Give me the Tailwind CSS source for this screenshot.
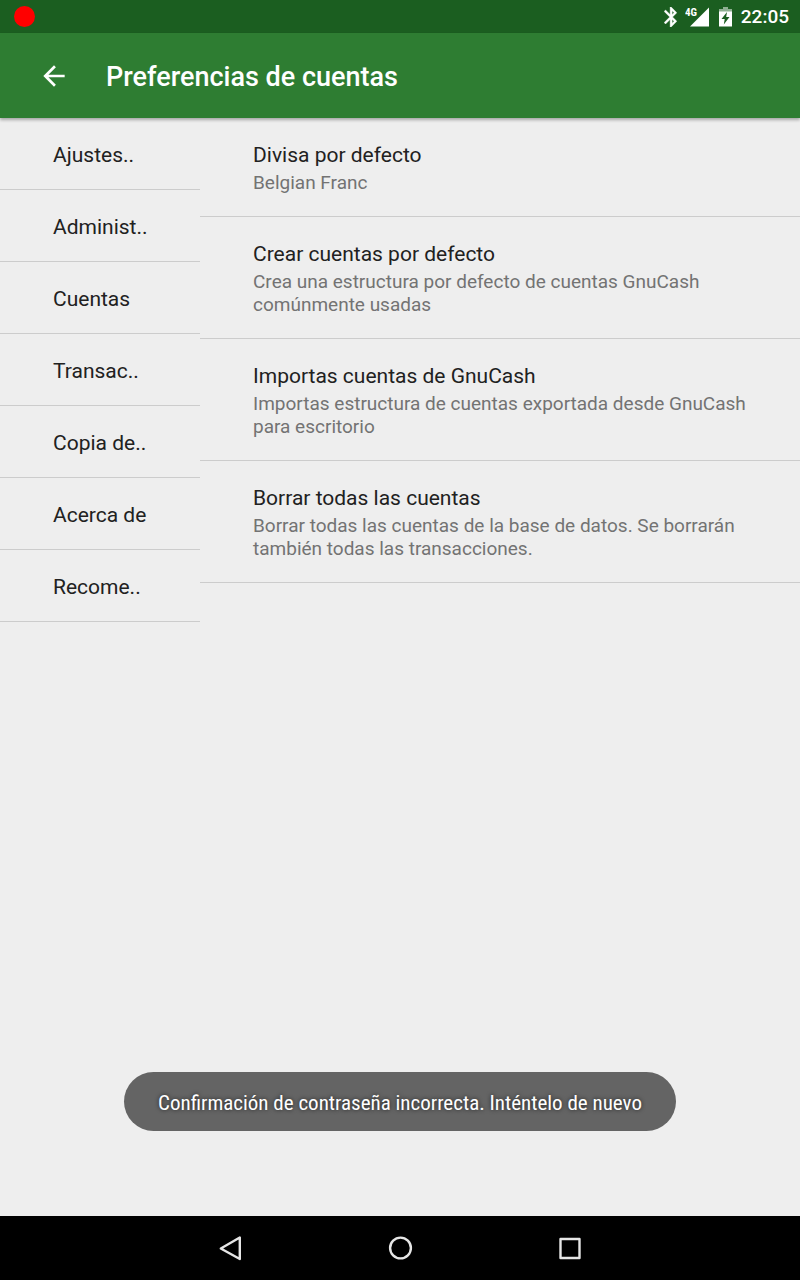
<!DOCTYPE html>
<html lang="es">
<head>
<meta charset="utf-8">
<meta name="viewport" content="width=device-width, initial-scale=1">
<title>Preferencias de cuentas</title>
<script src="https://cdn.jsdelivr.net/npm/@tailwindcss/browser@4"></script>
</head>
<body class="relative flex min-h-screen flex-col bg-[#eeeeee] font-['Roboto',sans-serif] text-[#212121]">
  <div class="flex h-[33px] items-center justify-between bg-[#1b5e20] pr-[11px] pl-[14px] text-white">
    <div class="size-[21px] rounded-full bg-[#ff0000]"></div>
    <div class="flex items-center">
      <svg class="mr-[8px] h-[20px] w-[13px]" viewBox="5 2 12.710 20" fill="currentColor" stroke="currentColor" stroke-width="0.400" aria-label="Bluetooth"><path d="M17.710 7.710L12 2h-1v7.590L6.410 5 5 6.410 10.590 12 5 17.590 6.410 19 11 14.410V22h1l5.710-5.710-4.300-4.290 4.300-4.290zM13 5.830l1.880 1.880L13 9.590V5.830zm1.880 10.460L13 18.170v-3.760l1.880 1.880z"/></svg>
      <svg class="mr-[10px] h-[20px] w-[24px]" viewBox="0 0 24 20" fill="currentColor" aria-label="4G"><path d="M24 .5v19H5z"/><text x="0" y="9" font-family="Roboto Condensed, Roboto" font-size="11" font-weight="700">4G</text></svg>
      <svg class="mr-[9px] h-[20px] w-[13px]" viewBox="0 0 13 20" aria-label="Batería"><path d="M4 0h5v2h4v3H0V2h4z" fill="#8fb092"/><path d="M0 4.500h13v15H0z" fill="#fff"/><path d="M8 5 2.500 12h3.200L4.800 17.500 10.500 10H7.200z" fill="#1b5e20"/></svg>
      <span class="text-[19px] leading-[23px] font-medium">22:05</span>
    </div>
  </div>

  <header class="z-10 flex h-[85px] items-center bg-[#2e7d32] pl-[38px] text-white shadow-[0_2px_3px_rgba(0,0,0,0.3)]">
    <button type="button" aria-label="Atrás" class="mr-[36px] size-[32px]">
      <svg class="size-[32px]" viewBox="0 0 24 24" fill="currentColor"><path d="M20 11H7.830l5.590-5.590L12 4l-8 8 8 8 1.410-1.410L7.830 13H20z"/></svg>
    </button>
    <h1 class="pt-[2px] text-[27px] leading-[32px] font-medium">Preferencias de cuentas</h1>
  </header>

  <div class="flex flex-1 items-start">
    <nav class="w-1/4 text-[21px] leading-[28px]">
      <a href="#" class="block border-b border-[#cccccc] pt-[23px] pb-[20px] pl-[53px]">Ajustes..</a>
      <a href="#" class="block border-b border-[#cccccc] pt-[23px] pb-[20px] pl-[53px]">Administ..</a>
      <a href="#" class="block border-b border-[#cccccc] pt-[23px] pb-[20px] pl-[53px]">Cuentas</a>
      <a href="#" class="block border-b border-[#cccccc] pt-[23px] pb-[20px] pl-[53px]">Transac..</a>
      <a href="#" class="block border-b border-[#cccccc] pt-[23px] pb-[20px] pl-[53px]">Copia de..</a>
      <a href="#" class="block border-b border-[#cccccc] pt-[23px] pb-[20px] pl-[53px]">Acerca de</a>
      <a href="#" class="block border-b border-[#cccccc] pt-[23px] pb-[20px] pl-[53px]">Recome..</a>
    </nav>
    <main class="w-3/4">
      <button type="button" class="flex w-full flex-col gap-[2px] border-b border-[#cccccc] pt-[23px] pr-[53px] pb-[22px] pl-[53px] text-left">
        <span class="text-[21px] leading-[28px]">Divisa por defecto</span>
        <span class="text-[19px] leading-[23px] text-[#737373]">Belgian Franc</span>
      </button>
      <button type="button" class="flex w-full flex-col gap-[2px] border-b border-[#cccccc] pt-[23px] pr-[53px] pb-[22px] pl-[53px] text-left">
        <span class="text-[21px] leading-[28px]">Crear cuentas por defecto</span>
        <span class="text-[19px] leading-[23px] text-[#737373]">Crea una estructura por defecto de cuentas GnuCash comúnmente usadas</span>
      </button>
      <button type="button" class="flex w-full flex-col gap-[2px] border-b border-[#cccccc] pt-[23px] pr-[53px] pb-[22px] pl-[53px] text-left">
        <span class="text-[21px] leading-[28px]">Importas cuentas de GnuCash</span>
        <span class="text-[19px] leading-[23px] text-[#737373]">Importas estructura de cuentas exportada desde GnuCash para escritorio</span>
      </button>
      <button type="button" class="flex w-full flex-col gap-[2px] border-b border-[#cccccc] pt-[23px] pr-[53px] pb-[22px] pl-[53px] text-left">
        <span class="text-[21px] leading-[28px]">Borrar todas las cuentas</span>
        <span class="text-[19px] leading-[23px] text-[#737373]">Borrar todas las cuentas de la base de datos. Se borrarán también todas las transacciones.</span>
      </button>
    </main>
  </div>

  <div role="status" class="absolute inset-x-0 bottom-[149px] flex justify-center">
    <p class="rounded-full bg-[#646464] px-[34px] pt-[17px] pb-[14px] font-['Roboto_Condensed','Roboto',sans-serif] text-[21px] leading-[28px] whitespace-nowrap text-white [text-shadow:0_0_4px_rgba(0,0,0,0.7)]">Confirmación de contraseña incorrecta. Inténtelo de nuevo</p>
  </div>

  <div class="flex h-[64px] items-center justify-center gap-[138px] bg-black text-[#e6e6e6]">
    <button type="button" aria-label="Volver" class="size-[32px]"><svg class="size-[32px]" viewBox="0 0 32 32" fill="none" stroke="currentColor" stroke-width="2.400" stroke-linejoin="round"><path d="M25.800 5.500v21.500L6.800 16.500z"/></svg></button>
    <button type="button" aria-label="Inicio" class="size-[32px]"><svg class="size-[32px]" viewBox="0 0 32 32" fill="none" stroke="currentColor" stroke-width="2.400"><circle cx="16.500" cy="16" r="10.400"/></svg></button>
    <button type="button" aria-label="Recientes" class="size-[32px]"><svg class="size-[32px]" viewBox="0 0 32 32" fill="none" stroke="currentColor" stroke-width="2.400" stroke-linejoin="round"><path d="M6.500 7h19v19h-19z"/></svg></button>
  </div>
</body>
</html>
